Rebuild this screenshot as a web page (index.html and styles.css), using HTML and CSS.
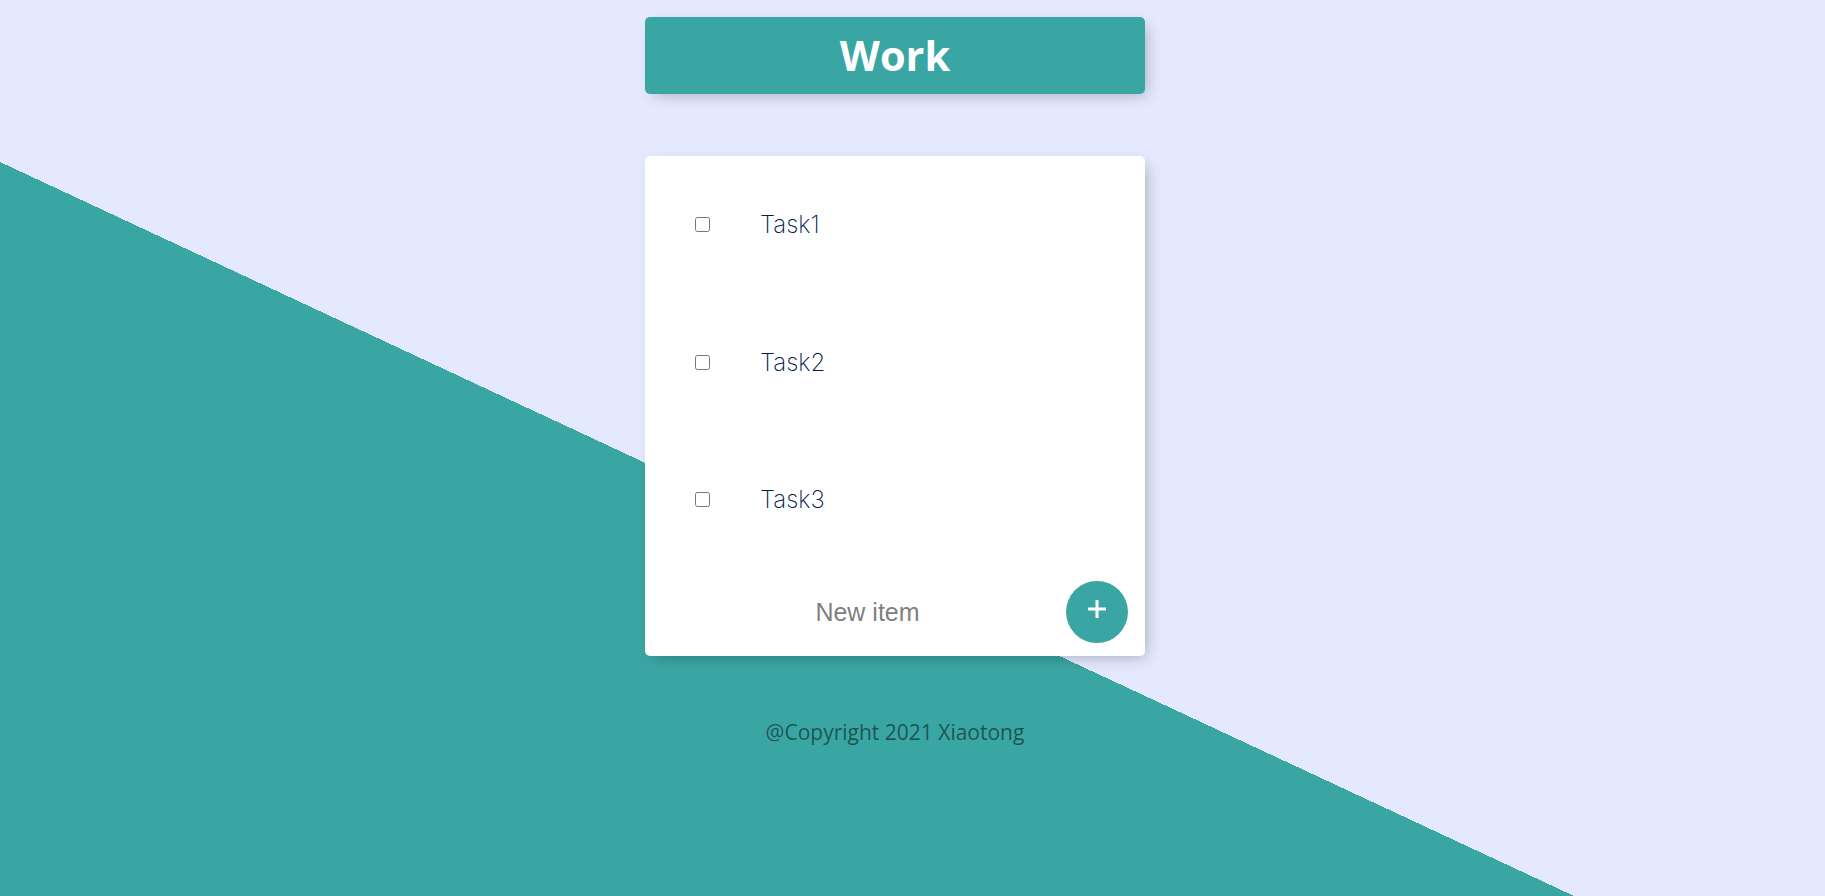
FILE: index.html
```html
<!DOCTYPE html>
<html lang="en">
<head>
<meta charset="utf-8">
<title>To Do List</title>
<link rel="stylesheet" href="styles.css">
</head>
<body>
<main class="page">
  <div class="box heading">
    <h1 class="heading-title">Work</h1>
  </div>
  <div class="box list">
    <div class="item">
      <input class="item-check" type="checkbox">
      <p class="item-text">Task1</p>
    </div>
    <div class="item">
      <input class="item-check" type="checkbox">
      <p class="item-text">Task2</p>
    </div>
    <div class="item">
      <input class="item-check" type="checkbox">
      <p class="item-text">Task3</p>
    </div>
    <form class="item-form" onsubmit="return false;">
      <input class="new-item" type="text" name="newItem" placeholder="New item" autocomplete="off">
      <button class="add-btn" type="submit" name="list" value="Work" aria-label="Add">
        <svg class="plus" width="20" height="20" viewBox="0 0 20 20"><path d="M10 1V19M1 10H19" stroke="#ffffff" stroke-width="3" fill="none"/></svg>
      </button>
    </form>
  </div>
  <footer class="footer">@Copyright 2021 Xiaotong</footer>
</main>
</body>
</html>
```
FILE: styles.css
```css
html {
  background-color: #E4E9FD;
  background-image: linear-gradient(25deg, #3AA6A3 50%, #E4E9FD 50%);
  background-size: 100% 1175px;
  background-repeat: no-repeat;
  min-height: 100%;
}

body {
  margin: 0;
  padding-right: 35px;
  font-family: "Open Sans", "Noto Sans", sans-serif;
}

.page {
  width: 500px;
  margin: 0 auto;
  display: flex;
  flex-direction: column;
}

.box {
  background: #ffffff;
  border-radius: 5px;
  box-shadow: 5px 5px 15px -5px rgba(0, 0, 0, 0.3);
}

.heading {
  margin-top: 17px;
  height: 77px;
  background-color: #3AA6A3;
  display: flex;
  align-items: center;
  justify-content: center;
}

.heading-title {
  margin: 0;
  color: #ffffff;
  font-size: 41.5px;
  font-weight: 700;
  line-height: 1;
}

.list {
  margin-top: 62px;
  height: 500px;
  display: flex;
  flex-direction: column;
}

.item {
  height: 137.5px;
  display: flex;
  align-items: center;
}

.item-check {
  width: 15px;
  height: 15px;
  margin: 0 0 0 50px;
}

.item-text {
  margin: 0 0 0 50px;
  font-family: "Inter", "Open Sans", sans-serif;
  font-size: 24px;
  font-weight: 200;
  color: #00204a;
}

.item-form {
  flex: 1;
  display: flex;
  align-items: center;
  padding: 0 17px 0 28px;
  gap: 4px;
}

.new-item {
  width: 389px;
  height: 60px;
  padding: 0;
  border: none;
  background: transparent;
  text-align: center;
  font-family: "Liberation Sans", Arial, sans-serif;
  font-size: 25px;
  color: #333333;
}

.new-item::placeholder {
  color: grey;
  opacity: 1;
}

.new-item:focus {
  outline: none;
}

.add-btn {
  width: 62px;
  height: 62px;
  border: 0;
  border-radius: 50%;
  background-color: #3AA6A3;
  padding: 0 0 6px;
  display: flex;
  align-items: center;
  justify-content: center;
}

.plus {
  display: block;
}

.footer {
  margin-top: 62px;
  text-align: center;
  font-size: 21px;
  color: rgba(0, 0, 0, 0.5);
}
```
